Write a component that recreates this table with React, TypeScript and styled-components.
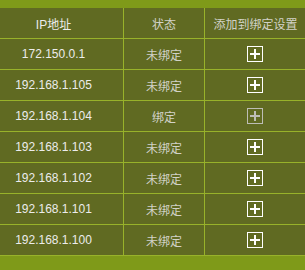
import { Fragment } from "react";
import styled, { createGlobalStyle } from "styled-components";

const GlobalStyle = createGlobalStyle`
  html, body {
    margin: 0;
    padding: 0;
    background: #7f9a19;
  }
  body {
    font-family: "Liberation Sans", "Noto Sans CJK SC", sans-serif;
  }
`;

const Page = styled.div`
  width: 305px;
  height: 270px;
  padding-top: 8px;
  box-sizing: border-box;
  background: #7f9a19;
  overflow: hidden;
`;

// the table is wider than the visible area, its left edge is cut off
const Table = styled.div`
  display: grid;
  grid-template-columns: 140px 81px 101px;
  margin-left: -16px;
  background: #606a22;
`;

const Cell = styled.div<{ $last?: boolean; $light?: boolean }>`
  height: 30px;
  display: flex;
  align-items: center;
  justify-content: center;
  border-bottom: 1px solid #98b22a;
  border-right: ${(p) => (p.$last ? "none" : "1px solid #98b22a")};
  font-size: 12px;
  color: ${(p) => (p.$light ? "#ececec" : "#d2d2c8")};
  white-space: nowrap;
`;

const AddButton = styled.button<{ $disabled?: boolean }>`
  width: 16px;
  height: 16px;
  padding: 0;
  border: 1px solid ${(p) => (p.$disabled ? "#bdbdb5" : "#ffffff")};
  background: transparent;
  display: flex;
  align-items: center;
  justify-content: center;
  cursor: pointer;
  box-sizing: border-box;
  margin-left: -1px;
`;

const rows = [
  { ip: "172.150.0.1", bound: false },
  { ip: "192.168.1.105", bound: false },
  { ip: "192.168.1.104", bound: true },
  { ip: "192.168.1.103", bound: false },
  { ip: "192.168.1.102", bound: false },
  { ip: "192.168.1.101", bound: false },
  { ip: "192.168.1.100", bound: false },
];

const PlusIcon = ({ color }: { color: string }) => (
  <svg width="10" height="10" viewBox="0 0 10 10">
    <rect x="4" y="0" width="2" height="10" fill={color} />
    <rect x="0" y="4" width="10" height="2" fill={color} />
  </svg>
);

const App = () => {
  return (
    <>
      <GlobalStyle />
      <Page>
        <Table>
          <Cell $light>IP地址</Cell>
          <Cell>状态</Cell>
          <Cell $last>添加到绑定设置</Cell>
          {rows.map((r) => (
            <Fragment key={r.ip}>
              <Cell $light>{r.ip}</Cell>
              <Cell>{r.bound ? "绑定" : "未绑定"}</Cell>
              <Cell $last>
                <AddButton $disabled={r.bound}>
                  <PlusIcon color={r.bound ? "#bdbdb5" : "#ffffff"} />
                </AddButton>
              </Cell>
            </Fragment>
          ))}
        </Table>
      </Page>
    </>
  );
};

export default App;
